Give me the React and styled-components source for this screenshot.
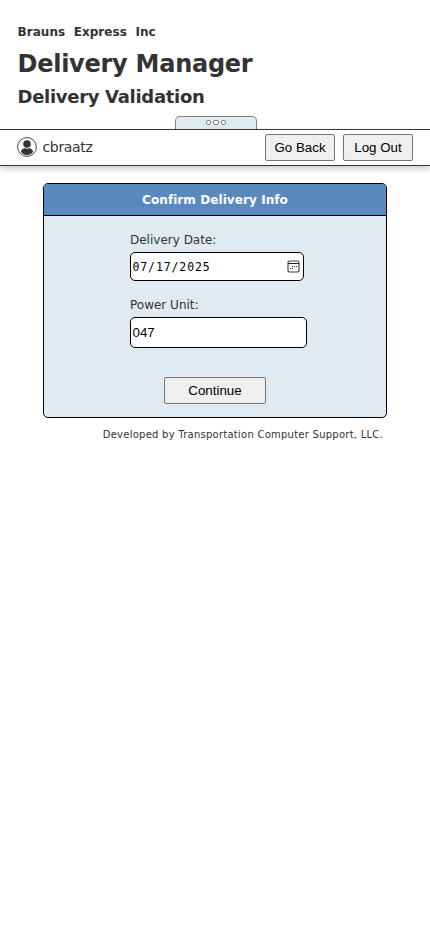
import React from "react";
import styled, { createGlobalStyle } from "styled-components";

const GlobalStyle = createGlobalStyle`
  *, *::before, *::after { box-sizing: border-box; }
  body {
    margin: 0;
    background: #fff;
    color: #333;
    font-family: Verdana, "DejaVu Sans", sans-serif;
  }
  h1, h2, h3, p { margin: 0; }
`;

const Header = styled.header`
  display: flex;
  flex-direction: column;
  align-items: flex-start;
  height: 129px;
  padding: 23px 17.5px 0;
  white-space: pre;
`;

const Company = styled.h3`
  font-size: 12px;
  line-height: 18px;
  letter-spacing: 0.05px;
`;

const Title = styled.h1`
  margin-top: 6px;
  font-size: 24px;
  line-height: 34px;
  letter-spacing: -0.26px;
`;

const Subtitle = styled.h2`
  margin-top: 3px;
  font-size: 18px;
  line-height: 26px;
  letter-spacing: -0.3px;
`;

const CollapseTab = styled.div`
  display: flex;
  align-self: center;
  justify-content: center;
  gap: 2px;
  width: 82px;
  height: 13px;
  margin-top: auto;
  margin-left: 2px;
  padding-top: 3px;
  border: 1px solid #808080;
  border-bottom: 0;
  border-radius: 5px 5px 0 0;
  background: #e0eaf3;
`;

const Dot = styled.span`
  width: ${(p) => (p.$wide ? 6 : 5)}px;
  height: 5px;
  border: 1px solid #808080;
  border-radius: 2px;
  background: #fff;
`;

const UserBar = styled.nav`
  display: flex;
  align-items: center;
  height: 37px;
  padding: 0 17px;
  border-top: 1px solid #333;
  border-bottom: 1px solid #333;
  box-shadow: 0 3px 6px rgba(0, 0, 0, 0.2);
`;

const UserName = styled.span`
  flex: 1;
  margin: -2px 0 0 5.500px;
  font-size: 14px;
  line-height: 20px;
  letter-spacing: -0.35px;
`;

const Button = styled.button`
  width: ${(p) => p.$width}px;
  height: 27px;
  margin: 0;
  padding: 1px 0 0;
  border: 1px solid #767676;
  border-radius: 2px;
  background: #efefef;
  color: #000;
  font: 13.333px/20px "Liberation Sans", Arial, sans-serif;
`;

const Actions = styled.div`
  display: flex;
  gap: 8px;
`;

const Main = styled.main`
  width: 344px;
  margin: 17px auto 0;
`;

const Card = styled.section`
  height: 235px;
  overflow: hidden;
  border: 1px solid #000;
  border-radius: 5px;
  background: #e0eaf3;
`;

const CardTitle = styled.h2`
  height: 32px;
  border-bottom: 1px solid #000;
  background: #5a8abd;
  color: #fff;
  font-size: 12px;
  line-height: 32px;
  letter-spacing: 0.08px;
  text-align: center;
`;

const Form = styled.form`
  display: flex;
  flex-direction: column;
  align-items: center;
`;

const Field = styled.label`
  display: flex;
  flex-direction: column;
  align-self: flex-start;
  width: 177px;
  margin-top: ${(p) => p.$top}px;
  margin-left: 86px;
  font-size: 12px;
  line-height: 18px;
`;

const DateBox = styled.span`
  display: flex;
  align-items: center;
  justify-content: space-between;
  width: 174px;
  height: 29px;
  margin-top: 3px;
  padding: 0 3px 0 1.500px;
  border: 1px solid #000;
  border-radius: 5px;
  background: #fff;
  color: #000;
  font: 11.500px/18px "DejaVu Sans Mono", monospace;
  letter-spacing: 0.88px;
  white-space: pre;
`;

const TextInput = styled.input`
  width: 177px;
  height: 31px;
  margin: 3px 0 0;
  padding: 0 1.500px 1px;
  border: 1px solid #000;
  border-radius: 5px;
  outline: 0;
  background: #fff;
  color: #000;
  font: 13.333px "Liberation Sans", Arial, sans-serif;
`;

const Submit = styled.div`
  margin-top: 29px;
`;

const Footer = styled.p`
  padding: 9px 4px 0 0;
  font-size: 10px;
  line-height: 16px;
  letter-spacing: 0.25px;
  text-align: right;
  white-space: nowrap;
`;

const UserGlyph = styled.svg`
  margin-top: -1px;
`;

const UserIcon = () => (
  <UserGlyph width="20" height="20" viewBox="0 0 20 20">
    <circle cx="10" cy="10" r="9.4" fill="#fff" stroke="#444" />
    <circle cx="10" cy="7" r="3.8" fill="#333" />
    <path d="M4 15C4 12.300 6.400 11.200 8 11.200q2 .9 4 0c1.600 0 4 1.100 4 3.800Q14 18 10 18T4 15Z" fill="#333" />
  </UserGlyph>
);

const CalendarIcon = () => (
  <svg width="13" height="13" viewBox="0 0 13 13">
    <rect x="1" y="1" width="11" height="11" rx="1.500" fill="none" stroke="#444" strokeWidth="1.200" />
    <path d="M1 3.500h11" stroke="#222" />
    <path d="M5 6.500h1M7 6.500h1M9 6.500h1M3 8.500h1M5 8.500h1" stroke="#222" />
  </svg>
);

export default function App() {
  return (
    <>
      <GlobalStyle />
      <Header>
        <Company>Brauns{"\u00a0 "}Express{"\u00a0 "}Inc</Company>
        <Title>Delivery Manager</Title>
        <Subtitle>Delivery Validation</Subtitle>
        <CollapseTab>
          <Dot />
          <Dot $wide />
          <Dot />
        </CollapseTab>
      </Header>
      <UserBar>
        <UserIcon />
        <UserName>cbraatz</UserName>
        <Actions>
          <Button $width={70}>Go Back</Button>
          <Button $width={70}>Log Out</Button>
        </Actions>
      </UserBar>
      <Main>
        <Card>
          <CardTitle>Confirm Delivery Info</CardTitle>
          <Form>
            <Field $top={15}>
              Delivery Date:
              <DateBox>
                07/17/2025
                <CalendarIcon />
              </DateBox>
            </Field>
            <Field $top={15}>
              Power Unit:
              <TextInput defaultValue="047" />
            </Field>
            <Submit>
              <Button type="button" $width={102}>Continue</Button>
            </Submit>
          </Form>
        </Card>
        <Footer>Developed by Transportation Computer Support, LLC.</Footer>
      </Main>
    </>
  );
}
